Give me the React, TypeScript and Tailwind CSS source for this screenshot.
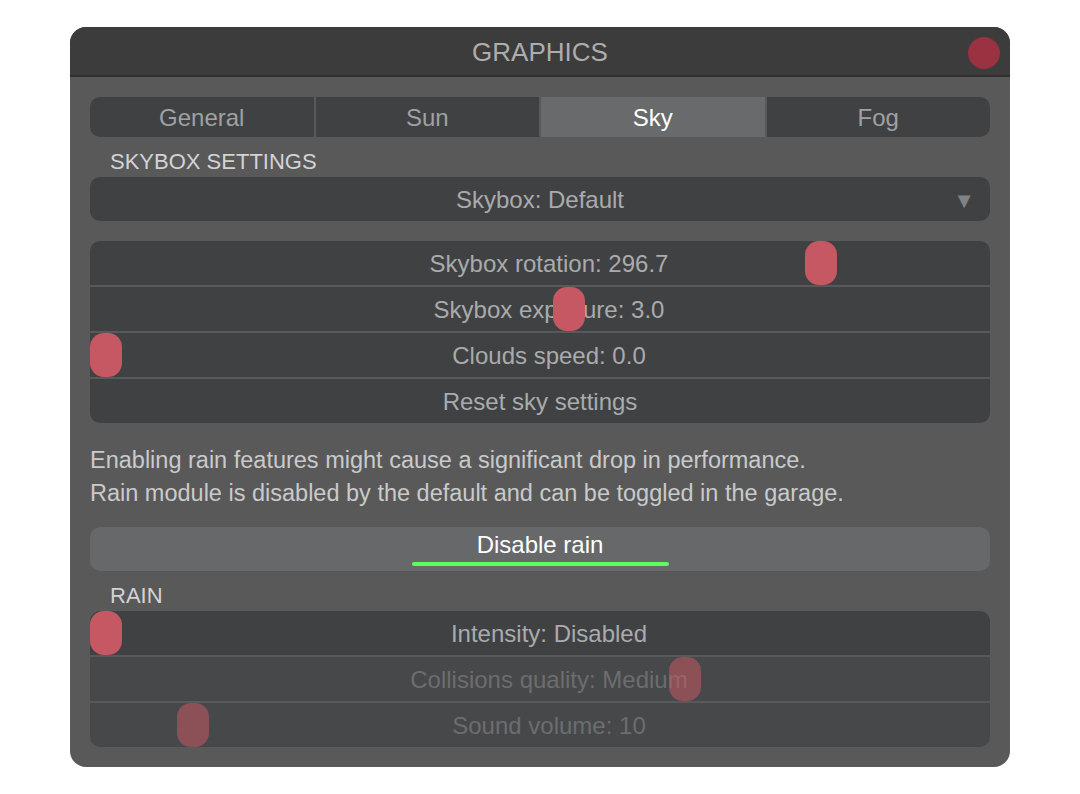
import React from 'react';

const font = { fontFamily: '"Liberation Sans", Arial, sans-serif' };

interface SliderRow {
  label: string;
  thumb: number;
  disabled?: boolean;
}

const skyRows: SliderRow[] = [
  { label: 'Skybox rotation: 296.7', thumb: 715 },
  { label: 'Skybox exposure: 3.0', thumb: 463 },
  { label: 'Clouds speed: 0.0', thumb: 0 },
];

const rainRows: SliderRow[] = [
  { label: 'Intensity: Disabled', thumb: 0 },
  { label: 'Collisions quality: Medium', thumb: 579, disabled: true },
  { label: 'Sound volume: 10', thumb: 87, disabled: true },
];

function Slider({ row }: { row: SliderRow }) {
  return (
    <div
      className={`relative h-[44px] pl-[18px] pt-[2px] flex items-center justify-center ${
        row.disabled ? 'bg-[#47484a] text-[#6c6d6f]' : 'bg-[#404143] text-[#a9abad]'
      }`}
    >
      <span className="text-[24px] leading-none">{row.label}</span>
      {/* thumb */}
      <div
        className={`absolute top-0 h-[44px] w-[32px] rounded-[14px] ${
          row.disabled ? 'bg-[#c55862]/55' : 'bg-[#c55862]'
        }`}
        style={{ left: row.thumb }}
      />
    </div>
  );
}

function SectionLabel({ text }: { text: string }) {
  return (
    <div className="h-[40px] pt-[13px] pl-5 text-[22px] leading-6 text-[#d2d3d5]">{text}</div>
  );
}

export default function App() {
  const tabs = ['General', 'Sun', 'Sky', 'Fog'];

  return (
    <div className="min-h-screen bg-white flex justify-center pt-[27px]" style={font}>
      <div className="w-[940px] h-[740px] rounded-[16px] bg-[#595959] overflow-hidden flex flex-col">
        {/* Header */}
        <div className="relative h-[50px] pt-[2px] bg-[#3c3c3c] border-b-2 border-[#2f2f2f] flex items-center justify-center">
          <span className="text-[26px] text-[#adadad]">GRAPHICS</span>
          <div className="absolute right-[10px] top-[10px] w-8 h-8 rounded-full bg-[#9b3241]" />
        </div>

        <div className="px-5 pt-5 pb-5 flex flex-col">
          {/* Tabs */}
          <div className="grid grid-cols-4 gap-[2px] rounded-[10px] overflow-hidden h-10">
            {tabs.map((t) => (
              <div
                key={t}
                className={`flex items-center justify-center pt-[2px] text-[24px] ${
                  t === 'Sky' ? 'bg-[#686a6c] text-white' : 'bg-[#404143] text-[#9fa1a3]'
                }`}
              >
                {t}
              </div>
            ))}
          </div>

          <SectionLabel text="SKYBOX SETTINGS" />

          {/* Dropdown */}
          <div className="relative h-[44px] pt-[2px] rounded-[10px] bg-[#404143] flex items-center justify-center text-[#a9abad]">
            <span className="text-[24px]">Skybox: Default</span>
            <span className="absolute right-[15px] text-[22px] text-[#808284]">▼</span>
          </div>

          {/* Sky sliders */}
          <div className="mt-5 rounded-[10px] overflow-hidden flex flex-col gap-[2px]">
            {skyRows.map((r) => (
              <Slider key={r.label} row={r} />
            ))}
            <div className="h-[44px] pt-[2px] bg-[#404143] flex items-center justify-center text-[#a9abad] text-[24px]">
              Reset sky settings
            </div>
          </div>

          {/* Warning */}
          <div className="mt-[21px] text-[23.5px] leading-[33px] text-[#c9cacc]">
            <p>Enabling rain features might cause a significant drop in performance.</p>
            <p>Rain module is disabled by the default and can be toggled in the garage.</p>
          </div>

          {/* Disable rain */}
          <div className="mt-[17px] h-[44px] rounded-[10px] bg-[#67686a] flex flex-col items-center pt-[6px]">
            <span className="text-[24px] leading-6 text-white">Disable rain</span>
            <div className="mt-[5px] h-[4px] w-[257px] rounded-full bg-[#5cff5c]" />
          </div>

          <SectionLabel text="RAIN" />

          {/* Rain sliders */}
          <div className="rounded-[10px] overflow-hidden flex flex-col gap-[2px]">
            {rainRows.map((r) => (
              <Slider key={r.label} row={r} />
            ))}
          </div>
        </div>
      </div>
    </div>
  );
}
